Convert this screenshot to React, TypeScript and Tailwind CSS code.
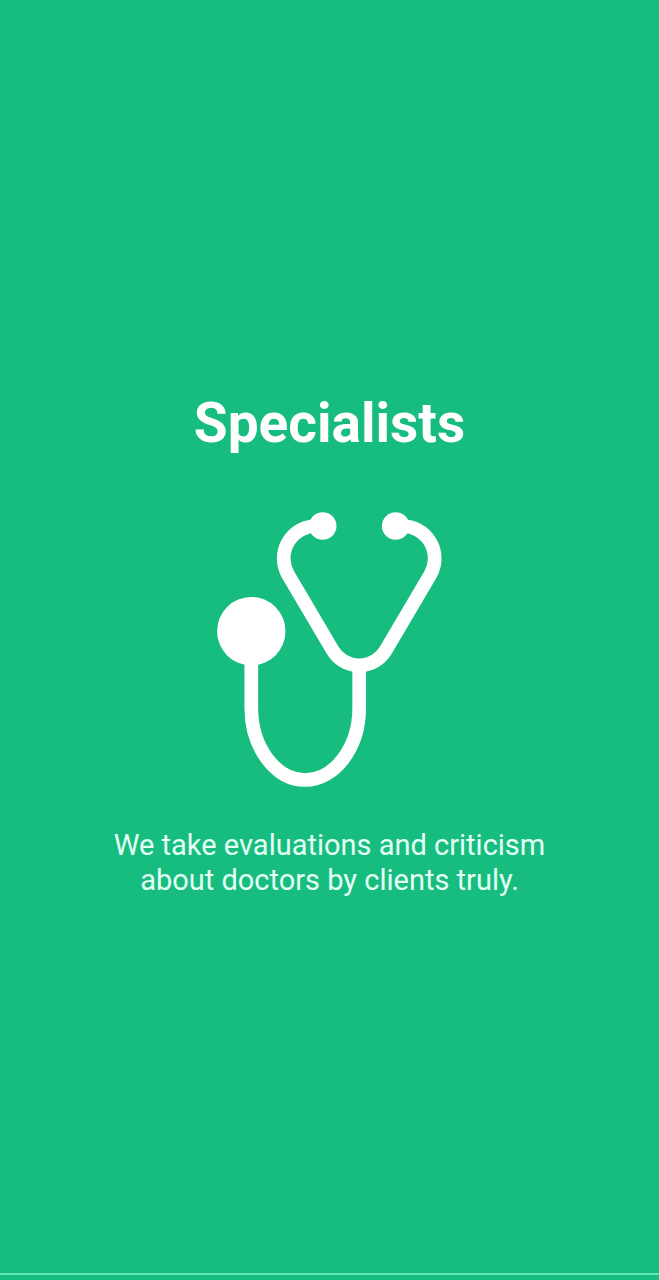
function StethoscopeIcon() {
  return (
    <svg
      viewBox="0 0 225 275"
      className="h-[275px] w-[225px]"
      fill="none"
      stroke="currentColor"
      strokeWidth="13.7"
      aria-hidden="true"
    >
      <path d="M105.7 14H99.1A32.4 32.4 0 0 0 71 62.5L115.5 138A30.9 30.9 0 0 0 168.9 138L213.4 62.5A32.4 32.4 0 0 0 185.3 14H178.7" />
      <path d="M142.2 153V196C142.2 235.5 117.5 268 88.2 268S34.3 235.5 34.3 196V119" />
      <g fill="currentColor" stroke="none">
        <circle cx="105.7" cy="14" r="13.8" />
        <circle cx="178.7" cy="14" r="13.8" />
        <circle cx="34.3" cy="119.2" r="34.2" />
      </g>
    </svg>
  );
}

export default function App() {
  return (
    <div className="flex min-h-screen flex-col bg-[#17bd7f] font-[Roboto,sans-serif] text-white">
      <main className="flex grow flex-col items-center justify-center px-24 pt-[17px] text-center">
        <h1 className="text-[55px] leading-[62px] font-bold">Specialists</h1>
        <div className="mt-[58px] mb-[41px]">
          <StethoscopeIcon />
        </div>
        <p className="text-[29px] leading-[35px] text-[#e4fff5]">
          We take evaluations and criticism about doctors by clients truly.
        </p>
      </main>
      <footer className="h-[7px] border-t-2 border-[#62e8b9]" />
    </div>
  );
}
